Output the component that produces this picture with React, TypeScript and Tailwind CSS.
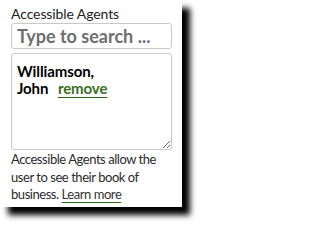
import React from "react";

const App = () => {
  return (
    <div className="h-[225px] w-[200px] bg-white">
      <div
        className="w-[182px] h-[207px] bg-white px-[11px] pt-[4px] text-[#222] shadow-[8px_8px_6px_#000]"
        style={{ fontFamily: "Lato, 'Noto Sans', sans-serif" }}
      >
        <label className="block text-[14px] leading-[19px] tracking-[-0.1px] text-[#222]">Accessible Agents</label>
        <input
          type="text"
          placeholder="Type to search ..."
          className="block h-[26px] w-[161px] rounded-[3px] border border-[#c8c8c8] px-[5px] text-[18px] font-bold placeholder:text-[#6e6e6e] outline-none"
        />
        <div className="mt-[4px] h-[97px] w-[161px] resize overflow-auto rounded-[3px] border border-[#c8c8c8] px-[5px] pt-[9px] text-[15px] font-bold leading-[17px] tracking-[-0.1px] text-black">
          Williamson,
          <br />
          John{" "}
          <a href="#" className="ml-[6px] text-[#3a6f1f] underline decoration-[#2d5f16] underline-offset-[3px]">
            remove
          </a>
        </div>
        <p className="mt-[1px] text-[13px] leading-[17.5px] tracking-[-0.45px] text-[#2b2b2b]">
          Accessible Agents allow the user to see their book of business.{" "}
          <a href="#" className="text-[#333] underline decoration-[#2d5f16] underline-offset-[3px]">
            Learn more
          </a>
        </p>
      </div>
    </div>
  );
};

export default App;
